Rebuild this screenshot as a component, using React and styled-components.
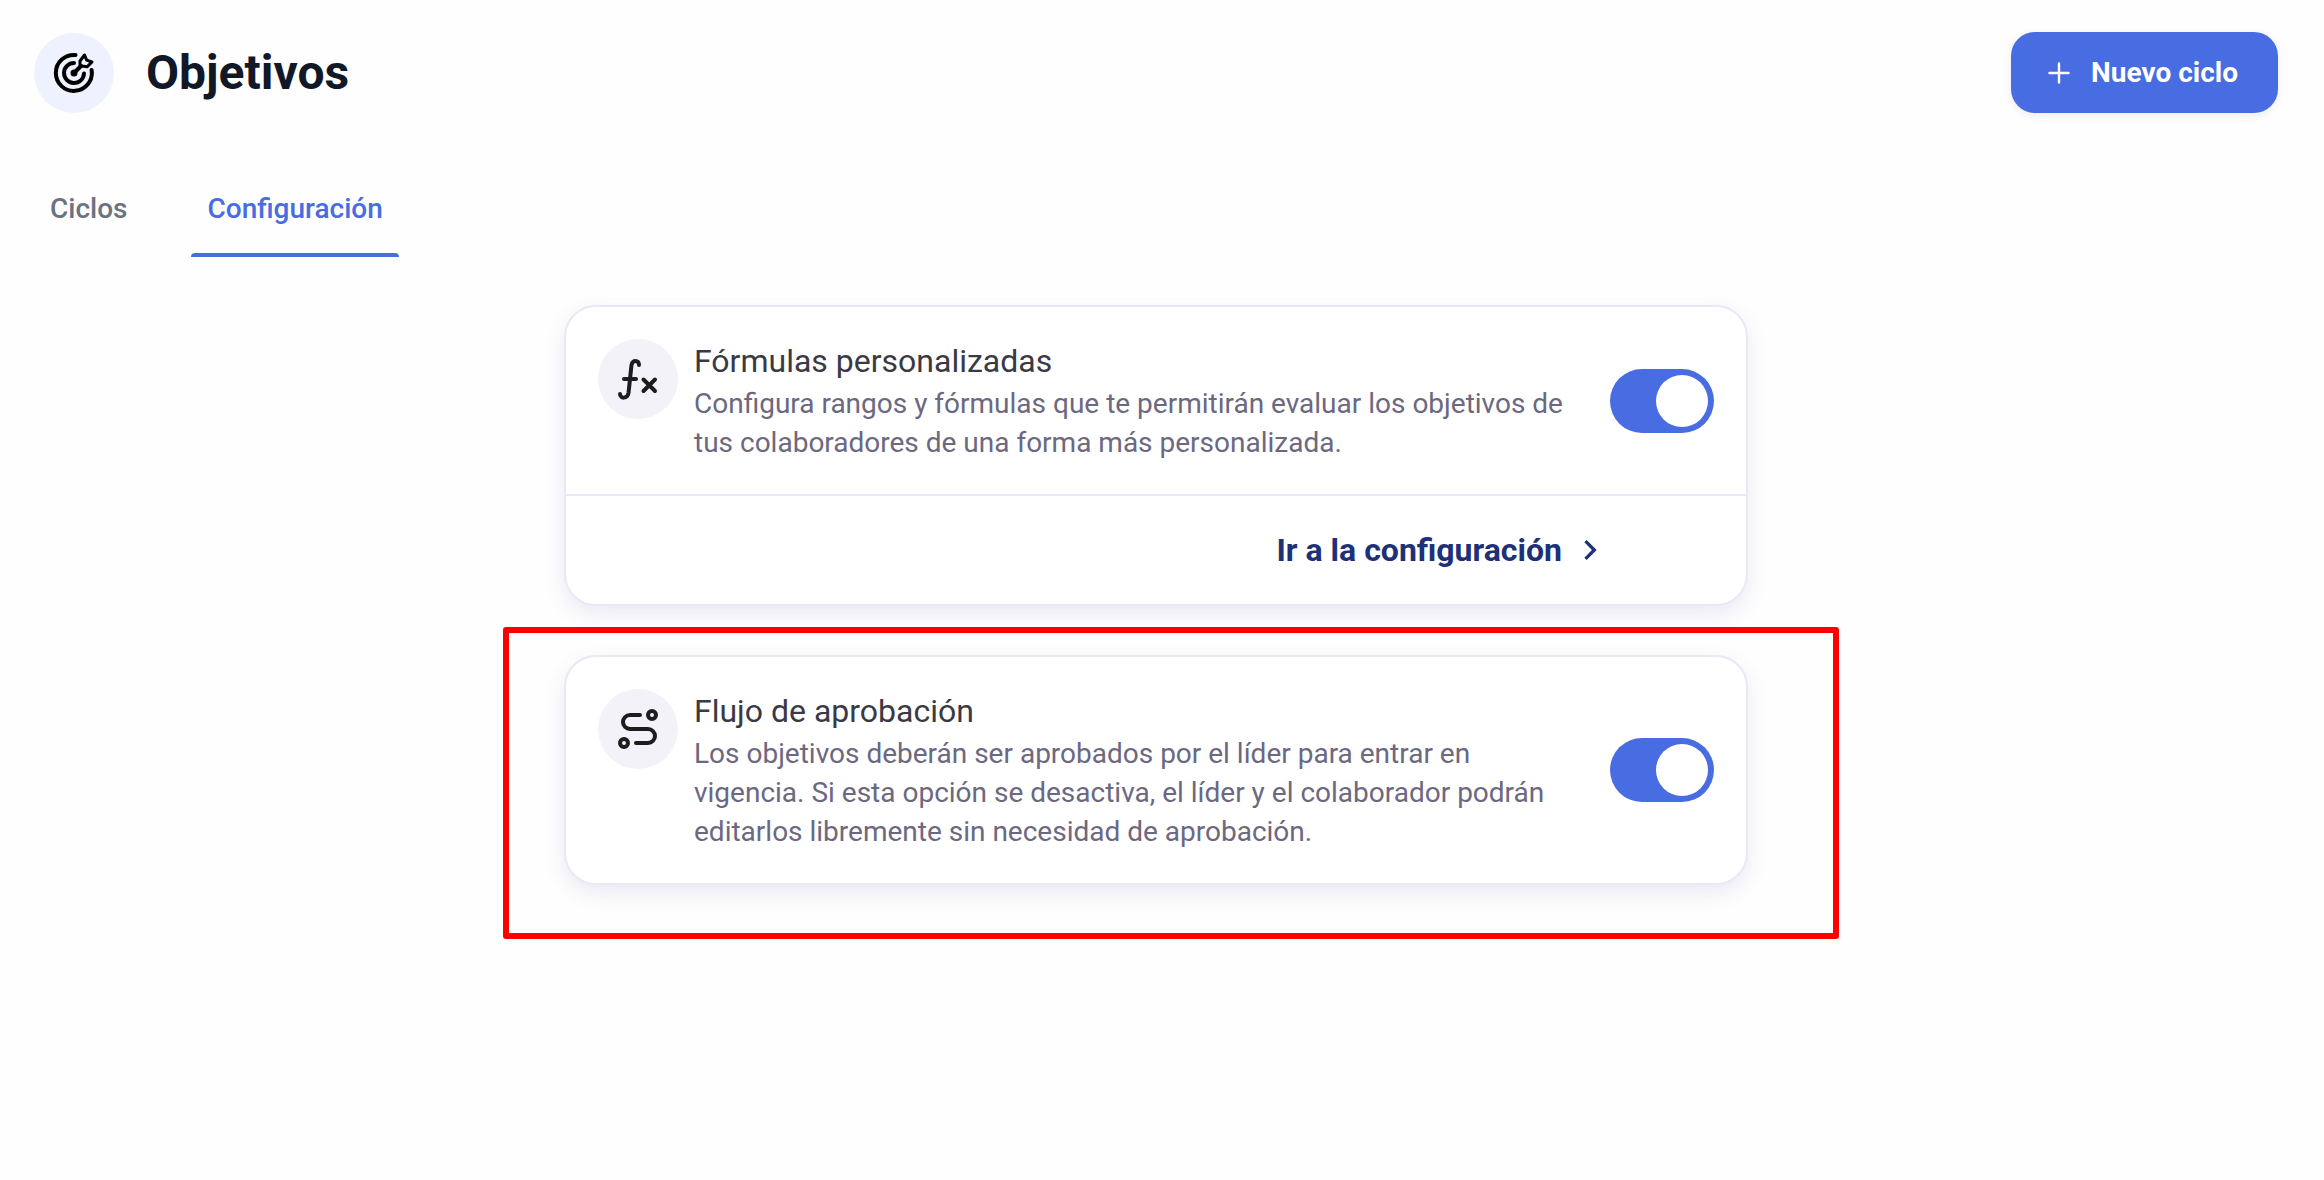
import React, { useState } from 'react'
import styled, { createGlobalStyle } from 'styled-components'
import { MdChevronRight } from 'react-icons/md'

const GlobalStyle = createGlobalStyle`
  *, *::before, *::after {
    box-sizing: border-box;
  }
  body {
    margin: 0;
    background: #fefefe;
    font-family: Roboto, sans-serif;
    color: #111827;
  }
`

const TargetIcon = () => (
  <svg width="42" height="42" viewBox="0 0 42 42" fill="none" stroke="#000" strokeWidth="4" strokeLinecap="round" strokeLinejoin="round" aria-hidden="true">
    <path d="M22.500 3A18 18 0 1 0 38.600 18" />
    <path d="M21 11A10 10 0 1 0 31 21.500" />
    <path d="M21 21l7-7" />
    <path d="M27 13.800V9l4.500-6 2.200 5.200L39 10l-5 4.800z" strokeWidth="3" />
    <circle cx="21" cy="21" r="1.500" />
  </svg>
)

const FormulaIcon = () => (
  <svg width="42" height="42" viewBox="0 0 42 42" fill="none" stroke="#1d1d1d" strokeWidth="4" strokeLinecap="round" strokeLinejoin="round" aria-hidden="true">
    <path d="M3 36c0 5 7.500 5 8.500-1l3-28c1-5.500 7.500-5.500 7.500 0" />
    <path d="M7 21h12M26.500 21.500l11.500 11.500M38 21.500l-11.500 11.500" />
  </svg>
)

const RouteIcon = () => (
  <svg width="42" height="42" viewBox="0 0 42 42" fill="none" stroke="#1d1d1d" strokeWidth="4" strokeLinecap="round" strokeLinejoin="round" aria-hidden="true">
    <circle cx="35" cy="7" r="4" />
    <circle cx="7" cy="35" r="4" />
    <path d="M23 7H13a7 7 0 0 0 0 14h18a7 7 0 0 1 0 14H19" />
  </svg>
)

const Switch = ({ label }) => {
  const [on, setOn] = useState(true)
  return <Toggle type="checkbox" role="switch" aria-label={label} checked={on} onChange={() => setOn(!on)} />
}

const Setting = ({ icon, title, children, footer }) => (
  <Card>
    <CardBody>
      <IconCircle $bg="#f3f2f8">{icon}</IconCircle>
      <CardText>
        <CardTitle>{title}</CardTitle>
        <Description>{children}</Description>
      </CardText>
      <Switch label={title} />
    </CardBody>
    {footer}
  </Card>
)

const App = () => {
  const [tab, setTab] = useState('Configuración')

  return (
    <Page>
      <GlobalStyle />
      <Header>
        <IconCircle $bg="#eef2ff"><TargetIcon /></IconCircle>
        <Title>Objetivos</Title>
        <NewButton type="button">
          <svg width="22" height="22" viewBox="0 0 22 22" stroke="#fff" strokeWidth="2.4" strokeLinecap="round" aria-hidden="true">
            <path d="M11 1.500v19M1.500 11h19" />
          </svg>
          Nuevo ciclo
        </NewButton>
      </Header>

      <Tabs role="tablist">
        {['Ciclos', 'Configuración'].map((name) => (
          <Tab key={name} type="button" role="tab" aria-selected={tab === name} $active={tab === name} onClick={() => setTab(name)}>
            {name}
          </Tab>
        ))}
      </Tabs>

      <Settings>
        <Setting
          icon={<FormulaIcon />}
          title="Fórmulas personalizadas"
          footer={
            <CardFooter>
              <ConfigLink href="#configuracion">
                Ir a la configuración
                <MdChevronRight size={40} />
              </ConfigLink>
            </CardFooter>
          }
        >
          Configura rangos y fórmulas que te permitirán evaluar los objetivos de tus colaboradores de una forma más personalizada.
        </Setting>

        <Highlighted>
          <Setting icon={<RouteIcon />} title="Flujo de aprobación">
            Los objetivos deberán ser aprobados por el líder para entrar en vigencia. Si esta opción se desactiva, el líder y el colaborador podrán editarlos libremente sin necesidad de aprobación.
          </Setting>
        </Highlighted>
      </Settings>
    </Page>
  )
}

const Page = styled.main`
  min-height: 100vh;
  padding: 32px 46px 32px 34px;
`

const Header = styled.header`
  display: flex;
  align-items: center;
`

const IconCircle = styled.div`
  display: flex;
  flex-shrink: 0;
  align-items: center;
  justify-content: center;
  width: 80px;
  height: 80px;
  border-radius: 50%;
  background: ${(props) => props.$bg};
`

const Title = styled.h1`
  margin: 0 auto 0 32px;
  font-size: 48px;
  line-height: 56px;
  font-weight: 700;
`

const NewButton = styled.button`
  display: flex;
  align-items: center;
  gap: 21px;
  padding: 24px 40px 24px 37px;
  border: 0;
  border-radius: 24px;
  background: #486ce1;
  color: #fff;
  font: 700 28px/33px Roboto, sans-serif;
  box-shadow: 0 2px 8px rgba(0, 0, 0, 0.08);
  cursor: pointer;
`

const Tabs = styled.div`
  display: flex;
  gap: 48px;
  margin-top: 48px;
`

const Tab = styled.button`
  position: relative;
  padding: 28px 16px;
  border: 0;
  background: none;
  color: ${(props) => (props.$active ? '#486ce1' : '#6b7280')};
  font: 500 28px/40px Roboto, sans-serif;
  cursor: pointer;

  &::after {
    content: '';
    display: ${(props) => (props.$active ? 'block' : 'none')};
    position: absolute;
    left: 0;
    right: 0;
    bottom: 0;
    height: 4px;
    border-radius: 4px 4px 0 0;
    background: #486ce1;
  }
`

const Settings = styled.section`
  display: flex;
  flex-direction: column;
  gap: 49px;
  max-width: 1184px;
  margin: 48px auto 0;
`

const Card = styled.article`
  border: 2px solid #e9e8f4;
  border-radius: 32px;
  background: #fff;
  box-shadow: 0 8px 20px rgba(90, 85, 170, 0.12);
`

const CardBody = styled.div`
  display: flex;
  gap: 16px;
  padding: 32px;
`

const CardText = styled.div`
  flex: 1;
  padding-right: 20px;
`

const CardTitle = styled.h2`
  margin: 0;
  color: #3a3944;
  font-size: 32px;
  line-height: 45px;
  font-weight: 400;
`

const Description = styled.p`
  margin: 0;
  color: #6b6880;
  font-size: 28px;
  line-height: 39px;
`

const Toggle = styled.input`
  appearance: none;
  display: flex;
  flex-shrink: 0;
  align-self: center;
  width: 104px;
  height: 64px;
  margin: 0;
  padding: 6px;
  border-radius: 32px;
  background: #486ce1;
  cursor: pointer;

  &::before {
    content: '';
    width: 52px;
    height: 52px;
    margin-left: auto;
    border-radius: 50%;
    background: #fff;
  }
  &:not(:checked) {
    background: #c9c8d6;
  }
  &:not(:checked)::before {
    margin-left: 0;
  }
`

const CardFooter = styled.footer`
  display: flex;
  justify-content: flex-end;
  padding: 32px 136px 32px 32px;
  border-top: 2px solid #e9e8f4;
`

const ConfigLink = styled.a`
  display: flex;
  align-items: center;
  gap: 8px;
  color: #1d3178;
  font-size: 32px;
  line-height: 44px;
  font-weight: 700;
  text-decoration: none;
`

/* red frame drawn over the page around one setting */
const Highlighted = styled.div`
  position: relative;

  &::after {
    content: '';
    position: absolute;
    inset: -28px -91px -54px -61px;
    border: 6px solid #ff0000;
    border-radius: 3px;
    pointer-events: none;
  }
`

export default App
